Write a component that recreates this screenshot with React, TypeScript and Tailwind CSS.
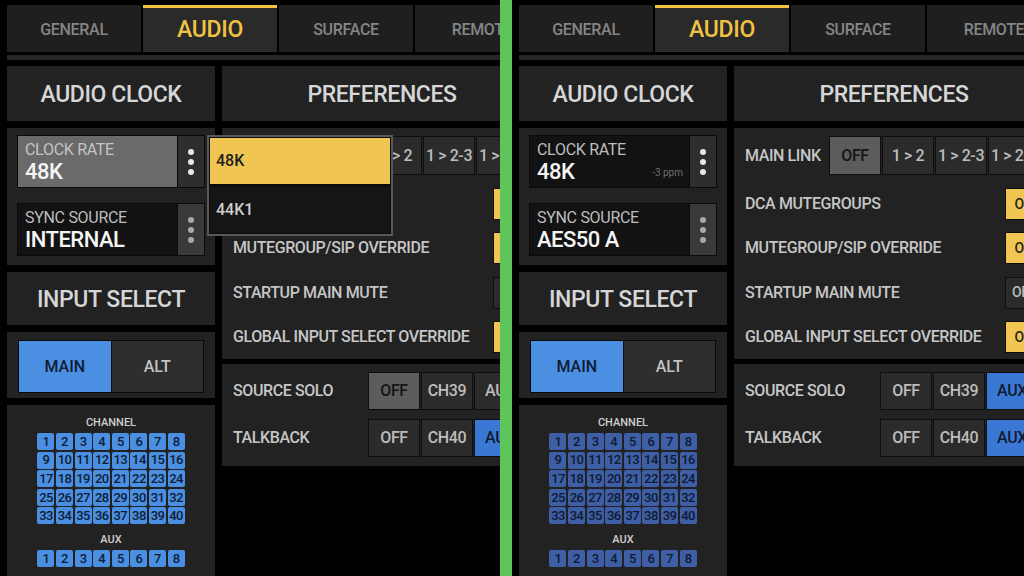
import React from 'react';

const TABS = ['GENERAL', 'AUDIO', 'SURFACE', 'REMOTE'];

function Dots({ dim }: { dim?: boolean }) {
  return (
    <div className={`w-[26px] shrink-0 flex flex-col items-center justify-center gap-[4px] ${dim ? 'bg-[#3a3a3a]' : 'bg-[#2e2e2e]'}`}>
      {[0, 1, 2].map((i) => (
        <div key={i} className={`w-[6px] h-[6px] rounded-full ${dim ? 'bg-[#a8a8a8]' : 'bg-[#e8e8e8]'}`} />
      ))}
    </div>
  );
}

function Field({ label, value, open, ppm, dim }: { label: string; value: string; open?: boolean; ppm?: string; dim?: boolean }) {
  return (
    <div className="flex h-[53px] border border-[#0a0a0a] gap-[1px] bg-[#0a0a0a]">
      <div className={`relative flex-1 flex flex-col justify-center pl-[7px] pt-[2px] ${open ? 'bg-[#6a6a6a]' : 'bg-[#121212]'}`}>
        <span className={`text-[16px] leading-[18px] tracking-[-0.3px] ${open ? 'text-[#c4c4c4]' : 'text-[#bdbdbd]'}`}>{label}</span>
        <span className="text-[22px] leading-[26px] tracking-[-0.5px] text-[#f4f4f4] font-medium">{value}</span>
        {ppm && <span className="absolute right-[6px] bottom-[7px] text-[10px] text-[#6f6f6f]">{ppm}</span>}
      </div>
      <Dots dim={dim} />
    </div>
  );
}

function Btn({ children, tone }: { children: React.ReactNode; tone?: 'gray' | 'blue' }) {
  const cls =
    tone === 'gray'
      ? 'bg-[#5c5c5c] text-[#141414]'
      : tone === 'blue'
      ? 'bg-[#3b78d6] text-[#101a2c]'
      : 'bg-[#2b2b2b] text-[#bdbdbd]';
  return (
    <div className={`w-[52px] shrink-0 h-full border border-[#0e0e0e] flex items-center justify-center text-[16px] font-medium tracking-[-0.4px] whitespace-nowrap ${cls}`}>
      {children}
    </div>
  );
}

function Toggle({ on }: { on: boolean }) {
  return (
    <div
      className={`w-[38px] h-[32px] shrink-0 border border-[#0e0e0e] flex items-center justify-center text-[14px] font-medium ${
        on ? 'bg-[#f0c552] text-[#222]' : 'bg-[#2b2b2b] text-[#bbb]'
      }`}
    >
      {on ? 'ON' : 'OFF'}
    </div>
  );
}

function Grid({ count, dark }: { count: number; dark?: boolean }) {
  return (
    <div className="grid grid-cols-[repeat(8,17px)] gap-[1.6px] justify-center">
      {Array.from({ length: count }, (_, i) => (
        <div
          key={i}
          className={`h-[17px] rounded-[2px] flex items-center justify-center text-[13px] font-medium tracking-[-0.6px] ${
            dark ? 'bg-[#3e5ea6] text-[#0f1a30]' : 'bg-[#4a8fe2] text-[#0f1d35]'
          }`}
        >
          {i + 1}
        </div>
      ))}
    </div>
  );
}

function Header({ children, h }: { children: React.ReactNode; h: string }) {
  return (
    <div className={`${h} bg-[#222] flex items-center justify-center pt-[4px] text-[23px] tracking-[-0.4px] font-medium text-[#d6d6d6]`}>
      {children}
    </div>
  );
}

function Panel({ variant }: { variant: 'left' | 'right' }) {
  const left = variant === 'left';
  return (
    <div className={`relative h-[576px] overflow-hidden bg-black shrink-0 ${left ? 'w-[500px]' : 'w-[512px]'}`}>
      <div className="w-[549px] pl-[7px]">
        <div className="flex gap-[2px] pt-[5px]">
          {TABS.map((t) =>
            t === 'AUDIO' ? (
              <div
                key={t}
                className="w-[134px] h-[47px] shrink-0 bg-[#2a2a2a] border-t-[3px] border-[#f0c244] flex items-center justify-center text-[23px] tracking-[-0.3px] font-medium text-[#f0c244] pt-[1px]"
              >
                {t}
              </div>
            ) : (
              <div
                key={t}
                className="w-[134px] h-[47px] shrink-0 bg-[#1f1f1f] flex items-center justify-center pt-[2px] text-[16px] tracking-[-0.3px] text-[#858585] font-medium"
              >
                {t}
              </div>
            )
          )}
        </div>
        <div className="mt-[3px] h-[5px] w-[542px] bg-[#262626]" />

        <div className="mt-[6px] flex gap-[7px]">
          <div className="w-[208px] shrink-0 flex flex-col gap-[7px]">
            <Header h="h-[55px]">AUDIO CLOCK</Header>
            <div className="h-[137px] bg-[#222] pt-[7px] px-[10px] flex flex-col gap-[15px]">
              <Field label="CLOCK RATE" value="48K" open={left} ppm={left ? undefined : '-3 ppm'} />
              <Field label="SYNC SOURCE" value={left ? 'INTERNAL' : 'AES50 A'} dim />
            </div>
            <Header h="h-[53px]">INPUT SELECT</Header>
            <div className="h-[66px] bg-[#222] pt-[8px] px-[11px]">
              <div className="flex h-[53px] border border-[#0a0a0a] bg-[#0a0a0a] gap-[1px]">
                <div className="flex-1 bg-[#4a8fe2] flex items-center justify-center text-[16px] text-[#0f1d35] font-medium">MAIN</div>
                <div className="flex-1 bg-[#2e2e2e] flex items-center justify-center text-[16px] text-[#c4c4c4] font-medium">ALT</div>
              </div>
            </div>
            <div className="h-[180px] bg-[#222] pt-[11px] flex flex-col items-center">
              <span className="text-[11px] font-medium text-[#cfcfcf] leading-[14px] mb-[3px]">CHANNEL</span>
              <Grid count={40} dark={!left} />
              <span className="text-[11px] font-medium text-[#cfcfcf] leading-[14px] mt-[9px] mb-[3px]">AUX</span>
              <Grid count={8} dark={!left} />
            </div>
          </div>

          <div className="w-[320px] shrink-0 flex flex-col">
            <Header h="h-[55px]">PREFERENCES</Header>
            <div className="mt-[7px] h-[231px] bg-[#222] px-[11px] pt-[8px] text-[16px] font-medium tracking-[-0.4px] text-[#c6c6c6]">
              <div className="flex items-center h-[39px]">
                <span className="w-[84px] shrink-0">MAIN LINK</span>
                <div className="flex h-full gap-[1px]">
                  <Btn tone="gray">OFF</Btn>
                  <Btn>1 &gt; 2</Btn>
                  <Btn>1 &gt; 2-3</Btn>
                  <Btn>1 &gt; 2-4</Btn>
                </div>
              </div>
              <div className="mt-[7px]">
                {[
                  ['DCA MUTEGROUPS', true],
                  ['MUTEGROUP/SIP OVERRIDE', true],
                  ['STARTUP MAIN MUTE', false],
                  ['GLOBAL INPUT SELECT OVERRIDE', true],
                ].map(([l, on]) => (
                  <div key={l as string} className="flex items-center justify-between h-[44.3px]">
                    <span>{l as string}</span>
                    <Toggle on={on as boolean} />
                  </div>
                ))}
              </div>
            </div>
            <div className="mt-[5px] h-[102px] bg-[#222] px-[11px] pt-[8px] text-[16px] font-medium tracking-[-0.4px] text-[#c6c6c6] flex flex-col gap-[9px]">
              <div className="flex items-center h-[38px]">
                <span className="w-[135px] shrink-0">SOURCE SOLO</span>
                <div className="flex h-full gap-[1px]">
                  <Btn tone={left ? 'gray' : undefined}>OFF</Btn>
                  <Btn>CH39</Btn>
                  <Btn tone={left ? undefined : 'blue'}>AUX</Btn>
                </div>
              </div>
              <div className="flex items-center h-[38px]">
                <span className="w-[135px] shrink-0">TALKBACK</span>
                <div className="flex h-full gap-[1px]">
                  <Btn>OFF</Btn>
                  <Btn>CH40</Btn>
                  <Btn tone="blue">AUX</Btn>
                </div>
              </div>
            </div>
          </div>
        </div>
      </div>

      {left && (
        <div className="absolute left-[207px] top-[135px] w-[186px] h-[101px] border-2 border-[#585858] bg-[#0c0c0c] flex flex-col gap-[3px] p-[1px]">
          <div className="h-[46px] bg-[#f0c552] flex items-center pl-[6px] text-[16px] text-[#1e1e1e] font-medium">48K</div>
          <div className="flex-1 bg-[#151515] flex items-center pl-[6px] text-[16px] text-[#cfcfcf] font-medium">44K1</div>
        </div>
      )}
    </div>
  );
}

export default function App() {
  return (
    <div className="w-[1024px] h-[576px] flex bg-black overflow-hidden font-['Roboto','Liberation_Sans',sans-serif]">
      <Panel variant="left" />
      <div className="w-[12px] h-full bg-[#5ec55a] shrink-0" />
      <Panel variant="right" />
    </div>
  );
}
